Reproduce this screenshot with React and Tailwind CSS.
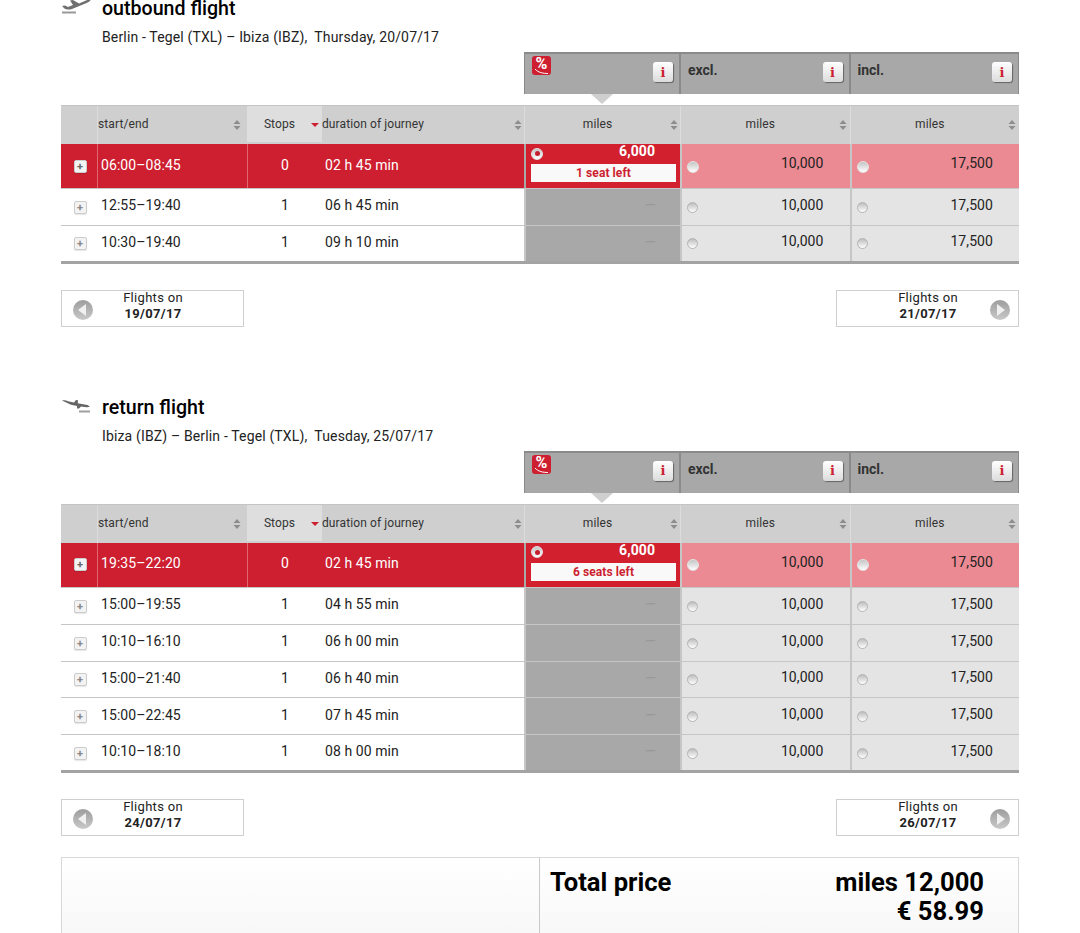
import React from 'react';

const cols = 'grid grid-cols-[36px_150px_75px_202px_156px_169.5px_169.5px]';

const PlaneOut = () => (
  <svg width="30" height="16" viewBox="0 0 30 16" className="block">
    <path d="M1 8 L4 7.5 L7 9 L12 7 L9 2.5 L12 2 L18 5.5 L25 2.5 C27 1.6 29.5 1 29.5 2 C29.5 3 27 4.4 25 5.2 L11 11 C8 12 5 11.5 3.5 10.5 Z" fill="#6f6f6f" />
    <rect x="1" y="13.5" width="14" height="2" fill="#999" />
  </svg>
);

const PlaneBack = () => (
  <svg width="30" height="16" viewBox="0 0 30 16" className="block">
    <path d="M1 3.5 C3 3 5 3.6 8 4.4 L13 5.4 L15 3 L17 3.2 L16.8 6.2 L25 7.8 C27 8.2 29 9 28.5 10 C26 10.4 23 10 20 9.6 L18 11.5 L16 11.5 L16 9 L10 7.8 Z" fill="#666" />
    <rect x="18" y="13.5" width="11" height="2" fill="#a0a0a0" />
  </svg>
);

const SortArrows = ({ className = '' }) => (
  <svg width="8" height="11" viewBox="0 0 8 11" className={'absolute top-1/2 -translate-y-1/2 ' + className}>
    <path d="M4 0.5 L7.5 4.5 H0.5 Z M4 10.5 L7.5 6.5 H0.5 Z" fill="#8d8d8d" />
  </svg>
);

const Radio = ({ checked, big }) => (
  <span
    className={
      'flex items-center justify-center rounded-full border bg-gradient-to-b ' +
      (big ? 'w-[12px] h-[12px] border-[#e4e4e4] from-[#c4c4c4] to-white' : 'w-[11px] h-[11px] border-[#b4b4b4] from-[#bdbdbd] to-white')
    }
  >
    {checked && <span className="w-[5px] h-[5px] rounded-full bg-[#c41f2e]" />}
  </span>
);

const Expand = ({ active }) => (
  <span
    className={
      'flex items-center justify-center w-[13px] h-[13px] rounded-[2px] border border-[#ccc] text-[11px] leading-none font-bold shadow-[0_1px_1px_rgba(0,0,0,0.1)] ' +
      (active ? 'bg-[#f4f4f4] text-[#666]' : 'mt-px bg-[#f3f3f3] text-[#888]')
    }
  >
    +
  </span>
);

const InfoButton = () => (
  <div className="flex items-center justify-center w-[20px] h-[20px] rounded-[3px] bg-gradient-to-b from-white to-[#dcdcdc] shadow-[1px_1px_1px_rgba(0,0,0,0.4)] text-[#cd1f30] text-[13px] font-bold font-['DejaVu_Serif',serif] leading-none">
    i
  </div>
);

const PercentBadge = () => (
  <div className="relative w-[19px] h-[19px] rounded-[3px] bg-[#cd1f30] text-white text-center text-[16px] leading-[15px]">
    %
    <svg width="19" height="19" viewBox="0 0 19 19" className="absolute inset-0">
      <path d="M3 13 C6 16.5 11 17.5 16 17.5" stroke="#fff" strokeWidth="1" fill="none" />
    </svg>
  </div>
);

const TabCell = ({ label, promo }) => (
  <div className="relative flex-1 h-[42px] bg-[#a8a8a8] border-t-2 border-x border-[#8a8a8a] px-[7px] pt-[7px] text-[14px] leading-[18px] font-bold text-[#333]">
    {promo ? <div className="-mt-[5px]"><PercentBadge /></div> : label}
    <div className="absolute right-[6px] top-[8px]"><InfoButton /></div>
    {promo && (
      <div className="absolute left-[66px] -bottom-[10px] w-0 h-0 border-x-[11px] border-x-transparent border-t-[10px] border-t-[#cfcfcf]" />
    )}
  </div>
);

const HeadRow = () => (
  <div className={cols + ' h-[39px] bg-[#cfcfcf] border-t border-[#c4c4c4] text-[12px] tracking-[0.1px] text-[#333]'}>
    <div />
    <div className="relative flex items-center pb-[2px] border-l border-[#dcdcdc]">
      start/end
      <SortArrows className="right-[6px]" />
    </div>
    <div className="relative flex items-center justify-center pr-[10px] mb-[2px] bg-[#dedede]">
      Stops
      <span className="absolute right-[3px] top-1/2 -translate-y-[1px] w-0 h-0 border-x-[4px] border-x-transparent border-t-[4px] border-t-[#cd1f30]" />
    </div>
    <div className="relative flex items-center pb-[2px]">
      duration of journey
      <SortArrows className="right-[2px]" />
    </div>
    <div className="relative flex items-center justify-center pr-[10px] pb-[2px] border-l border-[#dcdcdc]">
      miles
      <SortArrows className="right-[2px]" />
    </div>
    <div className="relative flex items-center justify-center pr-[10px] pb-[2px] border-l border-[#dcdcdc]">
      miles
      <SortArrows className="right-[3px]" />
    </div>
    <div className="relative flex items-center justify-center pr-[10px] pb-[2px] border-l border-[#dcdcdc]">
      miles
      <SortArrows className="right-[3px]" />
    </div>
  </div>
);

const PriceCell = ({ value, active }) => (
  <div
    className={
      'flex items-center justify-between pl-[5px] pr-[26px] border-l-2 border-[#c6c6c6] text-[#222] ' +
      (active ? 'bg-[#ec8a93]' : 'bg-[#e4e4e4]')
    }
  >
    <span className="mt-px"><Radio big={active} /></span>
    <span className={active ? '-mt-[5px]' : '-mt-[3px]'}>{value}</span>
  </div>
);

const FlightRow = ({ row, active, last, seats }) => (
  <div
    className={
      cols +
      ' text-[14px] tracking-[0.08px] ' +
      (active ? 'h-[45px] bg-[#cd1f30] text-white border-b border-[#c6c6c6]' : 'text-[#222] ') +
      (!active && last ? 'h-[38.2px] border-b-[3px] border-[#a3a3a3]' : '') +
      (!active && !last ? 'h-[36.8px] border-b border-[#c6c6c6]' : '')
    }
  >
    <div className="flex items-center justify-center pl-[2px]"><Expand active={active} /></div>
    <div className={'flex items-center pl-[3px] pb-[2px] border-l ' + (active ? 'border-[#e0666f]' : 'border-transparent')}>{row.time}</div>
    <div className={'flex items-center justify-center pb-[2px] border-l ' + (active ? 'border-[#e0666f]' : 'border-transparent')}>{row.stops}</div>
    <div className="flex items-center pl-[3px] pb-[2px]">{row.duration}</div>
    {active ? (
      <div className="bg-[#d2202f] border-l-2 border-[#a8a8a8] pl-[5px] pr-[4px] text-white">
        <div className="flex items-center justify-between pr-[21px] h-[15px] font-bold">
          <span className="mt-[4px]"><Radio checked big /></span>
          <span>6,000</span>
        </div>
        <div className="mt-[5px] h-[18px] bg-[#f9f9f9] text-[#cd1f30] text-[12px] leading-[18px] font-bold text-center">{seats}</div>
      </div>
    ) : (
      <div className="flex items-center justify-end pr-[24px] pb-[2px] bg-[#a8a8a8] border-l-2 border-[#c6c6c6] text-[#999]">—</div>
    )}
    <PriceCell value="10,000" active={active} />
    <PriceCell value="17,500" active={active} />
  </div>
);

const Pager = ({ label, date, dir }) => (
  <div className="relative w-[183px] h-[37px] border-[1.5px] border-[#cfcfcf] bg-white text-[13px] tracking-[0.3px] leading-[16px] text-[#222]">
    <div className="absolute -top-px left-[16px] w-[150px] text-center">
      <div>{label}</div>
      <div className="font-bold">{date}</div>
    </div>
    <div
      className={
        'absolute top-[9px] flex items-center justify-center w-[20px] h-[20px] rounded-full bg-gradient-to-b from-[#9d9d9d] to-[#c9c9c9] ' +
        (dir === 'prev' ? 'left-[11px]' : 'right-[8px]')
      }
    >
      {dir === 'prev' ? (
        <span className="-ml-[2px] w-0 h-0 border-y-[6px] border-y-transparent border-r-[8px] border-r-[#f0f0f0]" />
      ) : (
        <span className="ml-[2px] w-0 h-0 border-y-[6px] border-y-transparent border-l-[8px] border-l-[#f0f0f0]" />
      )}
    </div>
  </div>
);

const FlightSection = ({ title, icon, route, seats, rows, prev, next, className = '' }) => (
  <section className={className}>
    <div className="flex items-center h-[28px]">
      <div className="w-[41px] -mt-[4px]">{icon}</div>
      <h2 className="mt-[2px] text-[19.6px] font-medium text-black">{title}</h2>
    </div>
    <p className="h-[30px] flex items-center pl-[41px] pt-[0.6px] text-[14px] tracking-[0.15px] text-[#222] whitespace-pre">{route}</p>
    <div className="flex ml-[463px]">
      <div className="w-[156px] flex"><TabCell promo /></div>
      <div className="w-[169.5px] flex"><TabCell label="excl." /></div>
      <div className="w-[169.5px] flex"><TabCell label="incl." /></div>
    </div>
    <div className="mt-[11px]">
      <HeadRow />
      {rows.map((row, i) => (
        <FlightRow key={i} row={row} active={i === 0} last={i === rows.length - 1} seats={seats} />
      ))}
    </div>
    <div className="flex justify-between mt-[26px]">
      <Pager label="Flights on" date={prev} dir="prev" />
      <Pager label="Flights on" date={next} dir="next" />
    </div>
  </section>
);

const outbound = [
  { time: '06:00–08:45', stops: 0, duration: '02 h 45 min' },
  { time: '12:55–19:40', stops: 1, duration: '06 h 45 min' },
  { time: '10:30–19:40', stops: 1, duration: '09 h 10 min' },
];

const inbound = [
  { time: '19:35–22:20', stops: 0, duration: '02 h 45 min' },
  { time: '15:00–19:55', stops: 1, duration: '04 h 55 min' },
  { time: '10:10–16:10', stops: 1, duration: '06 h 00 min' },
  { time: '15:00–21:40', stops: 1, duration: '06 h 40 min' },
  { time: '15:00–22:45', stops: 1, duration: '07 h 45 min' },
  { time: '10:10–18:10', stops: 1, duration: '08 h 00 min' },
];

export default function App() {
  return (
    <div className="h-[933px] overflow-hidden bg-white font-['Roboto',sans-serif]">
      <div className="w-[958px] ml-[61px] -mt-[6px]">
        <FlightSection
          title="outbound flight"
          icon={<PlaneOut />}
          route="Berlin - Tegel (TXL) – Ibiza (IBZ),  Thursday, 20/07/17"
          seats="1 seat left"
          rows={outbound}
          prev="19/07/17"
          next="21/07/17"
        />
        <FlightSection
          className="mt-[66px]"
          title="return flight"
          icon={<PlaneBack />}
          route="Ibiza (IBZ) – Berlin - Tegel (TXL),  Tuesday, 25/07/17"
          seats="6 seats left"
          rows={inbound}
          prev="24/07/17"
          next="26/07/17"
        />
        <div className="flex h-[120px] mt-[21px] border border-[#d8d8d8] bg-gradient-to-b from-white to-[#f4f4f4]">
          <div className="w-[478px] border-r border-[#c9c9c9]" />
          <div className="flex-1 flex justify-between pl-[10px] pr-[34px] pt-[10px] text-[25.6px] leading-[29px] font-bold text-black">
            <span>Total price</span>
            <span className="text-right">
              miles 12,000
              <br />€ 58.99
            </span>
          </div>
        </div>
      </div>
    </div>
  );
}
